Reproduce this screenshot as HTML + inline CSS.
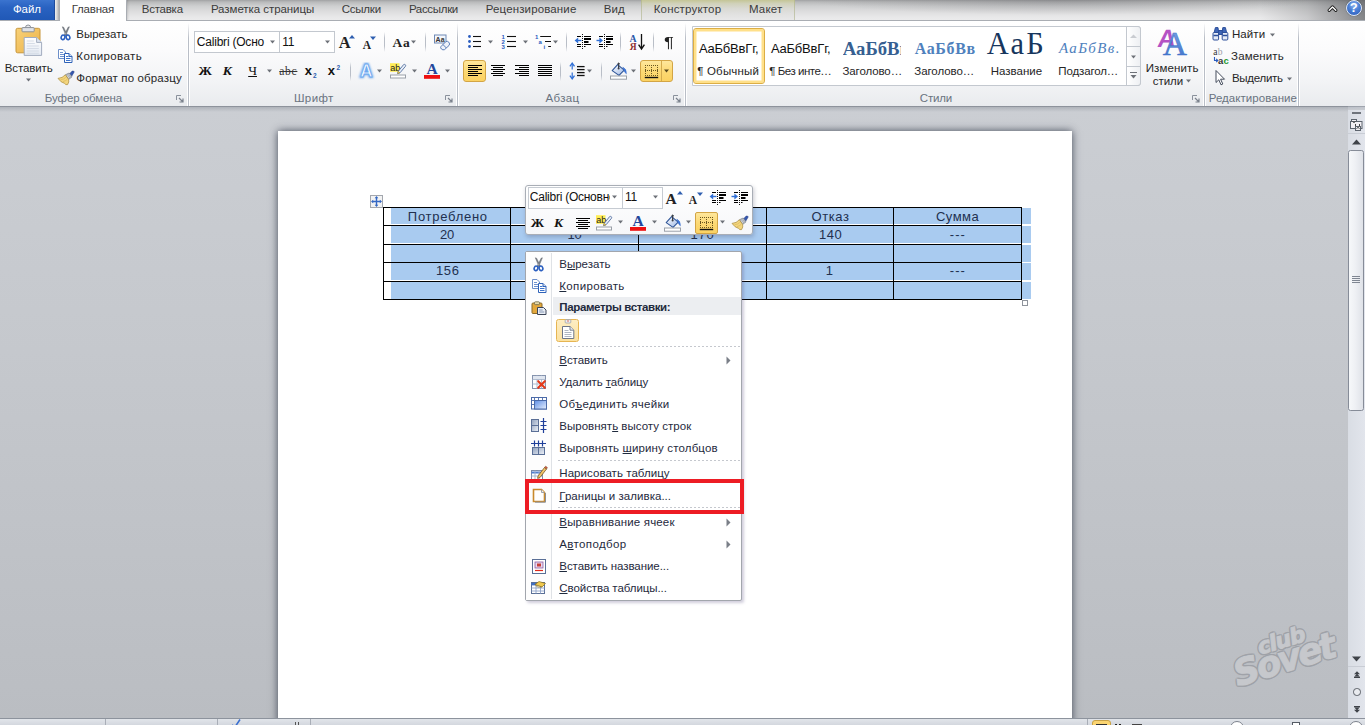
<!DOCTYPE html><html lang="ru"><head><meta charset="utf-8"><title>Word</title><style>
html,body{margin:0;padding:0}
body{width:1365px;height:725px;overflow:hidden;position:relative;background:#c6c9ce;font-family:"Liberation Sans",sans-serif;font-size:12px}
.t{position:absolute;white-space:pre;}
#app{position:absolute;left:0;top:0;width:1365px;height:725px;overflow:hidden}
#tabs{position:absolute;left:0;top:0;width:1365px;height:20px;background:linear-gradient(#a0a1a3 0,#b9babb 10%,#cecfd0 30%,#dcdcdd 55%,#e8e8e9 85%,#ebebec 100%)}
#ribbon{position:absolute;left:0;top:20px;width:1365px;height:86px;background:linear-gradient(#ffffff 0,#fbfbfc 35%,#f3f4f6 70%,#e9ebee 100%)}
#doc{position:absolute;left:0;top:106px;width:1348px;height:613px;background:linear-gradient(#cbced3 0,#c5c8cd 40%,#babdc2 100%);overflow:hidden}
.vsep{position:absolute;width:1px;background:linear-gradient(rgba(170,176,186,0) 0,#b9bec7 30%,#b9bec7 70%,rgba(170,176,186,0) 100%)}
.gsep{position:absolute;width:3px;background:linear-gradient(90deg,#fff 0,#fff 33.3%,#b9bec7 33.3%,#b9bec7 66.6%,#fff 66.6%,#fff 100%)}
</style></head><body><div id="app">
<div id="tabs"><div style="position:absolute;left:1260.0px;top:0.0px;width:105.0px;height:20.0px;background:linear-gradient(90deg,rgba(90,92,96,0) 0,rgba(90,92,96,.22) 45%,rgba(70,72,76,.62) 100%)"></div><div style="position:absolute;left:800.0px;top:0.0px;width:520.0px;height:16.0px;background:radial-gradient(ellipse 250px 15px at 50% 0,rgba(70,70,76,.26),rgba(70,70,76,0))"></div><div style="position:absolute;left:641.0px;top:0.0px;width:154.0px;height:20.0px;background:linear-gradient(#c4c596 0,#d0d1ba 18%,#d9d9d2 42%,#e1e1e0 70%,#e8e8e9 100%);border-left:1px solid rgba(170,174,130,.55);border-right:1px solid rgba(170,174,130,.55);box-sizing:border-box"></div><div style="position:absolute;left:0.0px;top:0.0px;width:55.0px;height:20.0px;background:linear-gradient(#3b74cf 0,#2a63c2 35%,#2058b6 100%);border-right:1px solid #1d4a9c;box-sizing:border-box"><span class="t" style="left:12.9px;top:1.3px;font-size:11.5px;line-height:16px;color:#fff;letter-spacing:-0.03px;">Файл</span></div><div style="position:absolute;left:55.0px;top:0.0px;width:4.0px;height:20.0px;background:linear-gradient(90deg,#eeeff0,#bfc0c2)"></div><div style="position:absolute;left:59.0px;top:-4.0px;width:68.0px;height:25.0px;background:#fff;border:1px solid #a9adb3;border-bottom:none;border-radius:3px 3px 0 0;box-sizing:border-box;box-shadow:0 0 3px rgba(0,0,0,.25)"></div><div style="position:absolute;left:60.0px;top:19.0px;width:66.0px;height:2.0px;background:#fff"></div><span class="t" style="left:71.7px;top:1.3px;font-size:11.5px;line-height:16px;color:#3b3b3b;letter-spacing:-0.20px;">Главная</span><span class="t" style="left:141.7px;top:1.3px;font-size:11.5px;line-height:16px;color:#3b3b3b;letter-spacing:-0.23px;">Вставка</span><span class="t" style="left:210.9px;top:1.3px;font-size:11.5px;line-height:16px;color:#3b3b3b;letter-spacing:-0.06px;">Разметка страницы</span><span class="t" style="left:341.7px;top:1.3px;font-size:11.5px;line-height:16px;color:#3b3b3b;letter-spacing:-0.22px;">Ссылки</span><span class="t" style="left:408.9px;top:1.3px;font-size:11.5px;line-height:16px;color:#3b3b3b;letter-spacing:-0.32px;">Рассылки</span><span class="t" style="left:485.7px;top:1.3px;font-size:11.5px;line-height:16px;color:#3b3b3b;letter-spacing:0.14px;">Рецензирование</span><span class="t" style="left:603.7px;top:1.3px;font-size:11.5px;line-height:16px;color:#3b3b3b;letter-spacing:0.08px;">Вид</span><span class="t" style="left:653.7px;top:1.3px;font-size:11.5px;line-height:16px;color:#3b3b3b;letter-spacing:0.18px;">Конструктор</span><span class="t" style="left:748.9px;top:1.3px;font-size:11.5px;line-height:16px;color:#3b3b3b;letter-spacing:0.21px;">Макет</span><svg style="position:absolute;left:1327.0px;top:4.0px;" width="11" height="9" viewBox="0 0 11 9"><path d="M2.2 6.3L5.5 3L8.8 6.3" fill="none" stroke="#222" stroke-width="3.2" stroke-linejoin="round" stroke-linecap="round"/><path d="M2.2 6.3L5.5 3L8.8 6.3" fill="none" stroke="#fff" stroke-width="1.3" stroke-linejoin="round" stroke-linecap="round"/></svg><div style="position:absolute;left:1346.0px;top:0.0px;width:16.0px;height:16.0px;border-radius:50%;background:radial-gradient(circle at 50% 30%,#8fb4ee 0,#4a7fd6 45%,#2a5ab8 100%);border:1px solid #dfe8f7;box-sizing:border-box;box-shadow:0 0 1px #234"></div><span class="t" style="left:1349.7px;top:0.3px;font-size:13px;line-height:16px;color:#fff;font-weight:bold;">?</span></div>
<div id="ribbon"><div style="position:absolute;left:0.0px;top:0.0px;width:1365.0px;height:1.0px;background:#a9adb3"></div><div style="position:absolute;left:60.0px;top:0.0px;width:66.0px;height:1.0px;background:#fff"></div><svg style="position:absolute;left:14.0px;top:4.0px;" width="30" height="34" viewBox="0 0 30 34"><defs><linearGradient id="pb1" x1="0" y1="0" x2="1" y2="1"><stop offset="0" stop-color="#f8d27a"/><stop offset="1" stop-color="#ecb146"/></linearGradient>
<linearGradient id="pb2" x1="0" y1="0" x2="0" y2="1"><stop offset="0" stop-color="#ffffff"/><stop offset="1" stop-color="#e3e9f3"/></linearGradient></defs>
<rect x="2" y="4.3" width="24" height="24.5" rx="1.6" fill="url(#pb1)" stroke="#c8963a" stroke-width="1"/>
<path d="M11.5 3.6a2.6 2.6 0 0 1 5.2 0" fill="#e9ebee" stroke="#8b9099"/><rect x="8" y="3.6" width="12.2" height="4.2" rx="0.8" fill="#dfe2e7" stroke="#8b9099"/>
<path d="M10.2 13.5H22.6L27.6 18.4V31.4H10.2z" fill="url(#pb2)" stroke="#a3adbf"/><path d="M22.6 13.5V18.4H27.6" fill="#dde4ef" stroke="#a3adbf"/>
<path d="M12.8 17h7M12.8 19.5h8M12.8 22h12M12.8 24.5h12M12.8 27h12M12.8 29.3h12" stroke="#d3d9e4" stroke-width="0.9"/></svg><span class="t" style="left:4.7px;top:39.7px;font-size:11.5px;line-height:16px;color:#262626;letter-spacing:-0.11px;">Вставить</span><svg style="position:absolute;left:25.0px;top:58.0px;" width="7" height="5" viewBox="0 0 7 5"><path d="M1.0 0.5h5l-2.5 3z" fill="#6d7178"/></svg><svg style="position:absolute;left:58.0px;top:6.0px;" width="14" height="15" viewBox="0 0 14 15"><path d="M4.3 0.8L5.6 1.2L9.4 9L8 9.6zM11.4 0.8L10.1 1.2L6.3 9L7.7 9.6z" fill="#7b8089" stroke="#5f646d" stroke-width="0.5"/>
<ellipse cx="5" cy="11.3" rx="1.8" ry="2.3" fill="#fff" stroke="#2b5fc0" stroke-width="1.6" transform="rotate(20 5 11.3)"/><ellipse cx="10" cy="11.3" rx="1.8" ry="2.3" fill="#fff" stroke="#2b5fc0" stroke-width="1.6" transform="rotate(-20 10 11.3)"/></svg><span class="t" style="left:76.3px;top:6.0px;font-size:11.5px;line-height:16px;color:#262626;letter-spacing:-0.01px;">Вырезать</span><svg style="position:absolute;left:57.0px;top:28.0px;" width="16" height="15" viewBox="0 0 16 15"><path d="M1.5 1.5H6L8.5 4V10.5H1.5z" fill="#fff" stroke="#6d8fc9"/><path d="M3 4.5h3M3 6.5h4M3 8.5h4" stroke="#5f86c9" stroke-width="0.9"/>
<path d="M7.5 5.5H12L15 8.5V14.5H7.5z" fill="#fff" stroke="#2f62b8"/><path d="M12 5.5V8.5H15" fill="#cfdcf2" stroke="#2f62b8"/><path d="M9 8.5h2.5M9 10.5h4.5M9 12.5h4.5" stroke="#3e74cc" stroke-width="1"/></svg><span class="t" style="left:76.3px;top:27.5px;font-size:11.5px;line-height:16px;color:#262626;letter-spacing:0.38px;">Копировать</span><svg style="position:absolute;left:57.0px;top:50.0px;" width="18" height="16" viewBox="0 0 18 16"><path d="M12.2 4.2L15.2 1.1Q16.7 0.5 17.2 1.9L14.6 6.3z" fill="#3558b0" stroke="#263f86" stroke-width="0.6"/>
<path d="M8.4 4.8L12.2 3L15 6.8L11.6 9.4z" fill="#cfd3da" stroke="#6f7580" stroke-width="0.7"/><path d="M10 4.2L13 8.2M11.2 3.6L14.1 7.5" stroke="#8a909b" stroke-width="0.6"/>
<path d="M8.4 4.8L11.6 9.4Q12.4 12 10.6 14.6Q8.6 15.2 7.6 13.4Q4 12.6 1 8.4Q5.4 8.2 8.4 4.8z" fill="#f3d57e" stroke="#a8893a" stroke-width="0.7"/>
<path d="M3.6 9.6Q6.4 9.8 8.8 7.4M6 11.6Q8.6 11 10.4 9.2" fill="none" stroke="#d8b85c" stroke-width="0.7"/></svg><span class="t" style="left:76.3px;top:50.0px;font-size:11.5px;line-height:16px;color:#262626;letter-spacing:0.14px;">Формат по образцу</span><span class="t" style="left:44.8px;top:69.7px;font-size:11.5px;line-height:16px;color:#6a7380;letter-spacing:-0.07px;">Буфер обмена</span><svg style="position:absolute;left:176.0px;top:75.0px;" width="8" height="8" viewBox="0 0 8 8"><path d="M0.5 5V0.5H5" fill="none" stroke="#8a919c"/><path d="M3 3L6.5 6.5M7 3.5V7H3.5" fill="none" stroke="#7a818c" stroke-width="1.2"/></svg><div class="gsep" style="position:absolute;left:187.0px;top:3.0px;width:3.0px;height:83.0px;-webkit-mask-image:linear-gradient(transparent 0,#000 18%);mask-image:linear-gradient(transparent 0,#000 18%)"></div><div style="position:absolute;left:194.0px;top:11.0px;width:86.0px;height:22.0px;background:#fff;border:1px solid #c3c8cf;box-sizing:border-box"></div><div style="position:absolute;left:279.0px;top:11.0px;width:56.0px;height:22.0px;background:#fff;border:1px solid #c3c8cf;box-sizing:border-box"></div><span class="t" style="left:196.8px;top:13.9px;font-size:12px;line-height:16px;color:#111;letter-spacing:-0.21px;">Calibri (Осно</span><svg style="position:absolute;left:269.0px;top:20.0px;" width="7" height="5" viewBox="0 0 7 5"><path d="M1.0 0.5h5l-2.5 3z" fill="#6d7178"/></svg><span class="t" style="left:282.3px;top:13.9px;font-size:12px;line-height:16px;color:#111;letter-spacing:-0.33px;">11</span><svg style="position:absolute;left:323.5px;top:20.0px;" width="7" height="5" viewBox="0 0 7 5"><path d="M1.0 0.5h5l-2.5 3z" fill="#6d7178"/></svg><span class="t" style="left:338.8px;top:12.2px;font-size:16.5px;line-height:21px;color:#222;font-weight:bold;font-family:'Liberation Serif', serif;">A</span><svg style="position:absolute;left:349.0px;top:14.5px;" width="6" height="4" viewBox="0 0 6 4"><path d="M0 3.5L3 0L6 3.5z" fill="#2f5fb0"/></svg><span class="t" style="left:362.7px;top:16.6px;font-size:11.5px;line-height:16px;color:#222;font-weight:bold;font-family:'Liberation Serif', serif;">A</span><svg style="position:absolute;left:370.0px;top:15.5px;" width="6" height="4" viewBox="0 0 6 4"><path d="M0 0.5L3 4L6 0.5z" fill="#2f5fb0"/></svg><div class="vsep" style="position:absolute;left:384.0px;top:12.0px;width:1.0px;height:20.0px;"></div><span class="t" style="left:392.6px;top:14.1px;font-size:13.5px;line-height:17px;color:#222;letter-spacing:0.72px;font-weight:bold;font-family:'Liberation Serif', serif;">Aa</span><svg style="position:absolute;left:410.0px;top:20.0px;" width="7" height="5" viewBox="0 0 7 5"><path d="M1.0 0.5h5l-2.5 3z" fill="#6d7178"/></svg><div class="vsep" style="position:absolute;left:425.0px;top:12.0px;width:1.0px;height:20.0px;"></div><svg style="position:absolute;left:433.0px;top:13.7px;" width="18" height="17" viewBox="0 0 18 17"><rect x="1.5" y="1" width="11.5" height="8" fill="#f4f7fc" stroke="#6f89b5"/><text x="2.6" y="7.6" font-family="Liberation Sans" font-size="7" font-weight="bold" fill="#333">Aa</text>
<path d="M8 12.5L13 7.5Q14.5 6.8 15.8 8.2Q17.4 10 16 11.5L11.6 15.6Q9.8 16.4 8.4 15Q7 13.6 8 12.5z" fill="#eef2f9" stroke="#5c7fb8" stroke-width="1"/><path d="M10 10.6L13.4 14" stroke="#5c7fb8"/></svg><span class="t" style="left:198.4px;top:42.4px;font-size:13.5px;line-height:17px;color:#111;font-weight:bold;font-family:'Liberation Serif', serif;">Ж</span><span class="t" style="left:222.7px;top:42.4px;font-size:13.5px;line-height:17px;color:#111;font-weight:bold;font-style:italic;font-family:'Liberation Serif', serif;">К</span><span class="t" style="left:248.2px;top:42.4px;font-size:13.5px;line-height:17px;color:#111;font-family:'Liberation Serif', serif;text-decoration:underline;">Ч</span><svg style="position:absolute;left:265.7px;top:49.0px;" width="7" height="5" viewBox="0 0 7 5"><path d="M1.0 0.5h5l-2.5 3z" fill="#6d7178"/></svg><span class="t" style="left:279.3px;top:43.4px;font-size:11.5px;line-height:16px;color:#333;letter-spacing:0.71px;font-family:'Liberation Serif', serif;text-decoration:line-through;">abc</span><span class="t" style="left:304.7px;top:43.3px;font-size:13px;line-height:16px;color:#111;font-weight:bold;">x</span><span class="t" style="left:313.1px;top:47.5px;font-size:6.5px;line-height:16px;color:#2f5fb0;font-weight:bold;">2</span><span class="t" style="left:327.7px;top:43.3px;font-size:13px;line-height:16px;color:#111;font-weight:bold;">x</span><span class="t" style="left:336.4px;top:39.5px;font-size:6.5px;line-height:16px;color:#2f5fb0;font-weight:bold;">2</span><div class="vsep" style="position:absolute;left:350.0px;top:42.0px;width:1.0px;height:19.0px;"></div><svg style="position:absolute;left:357.0px;top:42.0px;" width="19" height="18" viewBox="0 0 19 18"><defs><filter id="gl1" x="-30%" y="-30%" width="160%" height="160%"><feGaussianBlur stdDeviation="1.1"/></filter></defs>
<text x="3" y="15.3" font-family="Liberation Sans" font-size="17.5" font-weight="bold" fill="#6fa8ee" stroke="#6fa8ee" stroke-width="2.2" filter="url(#gl1)">A</text>
<text x="3" y="15.3" font-family="Liberation Sans" font-size="17.5" font-weight="bold" fill="#f4f9ff" stroke="#6aa8f0" stroke-width="0.8">A</text></svg><svg style="position:absolute;left:376.0px;top:49.0px;" width="7" height="5" viewBox="0 0 7 5"><path d="M1.0 0.5h5l-2.5 3z" fill="#6d7178"/></svg><svg style="position:absolute;left:389.0px;top:42.0px;" width="18" height="17" viewBox="0 0 18 17"><rect x="1" y="1.2" width="9.5" height="8.6" fill="#ffee55"/><text x="1.2" y="8.6" font-family="Liberation Sans" font-size="9" fill="#222">ab</text>
<path d="M9.2 9.4L14.6 2.6Q15.6 2 16.4 2.8Q17 3.6 16.4 4.4L11 10.8L8.6 11.6z" fill="#e8eef8" stroke="#55719f" stroke-width="0.9"/><path d="M8.6 11.6L9.2 9.4L11 10.8z" fill="#f6d35a" stroke="#a58a2e" stroke-width="0.5"/>
<rect x="1.5" y="13" width="15" height="3" fill="#fff" stroke="#9aa0a8"/></svg><svg style="position:absolute;left:410.9px;top:49.0px;" width="7" height="5" viewBox="0 0 7 5"><path d="M1.0 0.5h5l-2.5 3z" fill="#6d7178"/></svg><svg style="position:absolute;left:423.0px;top:42.0px;" width="18" height="17" viewBox="0 0 18 17"><text x="3.6" y="11.9" font-family="Liberation Serif" font-size="15.5" font-weight="bold" fill="#24479c">A</text><rect x="1" y="13" width="16" height="3.8" fill="#ee1111"/></svg><svg style="position:absolute;left:443.9px;top:49.0px;" width="7" height="5" viewBox="0 0 7 5"><path d="M1.0 0.5h5l-2.5 3z" fill="#6d7178"/></svg><span class="t" style="left:293.9px;top:69.7px;font-size:11.5px;line-height:16px;color:#6a7380;letter-spacing:0.41px;">Шрифт</span><svg style="position:absolute;left:445.0px;top:75.0px;" width="8" height="8" viewBox="0 0 8 8"><path d="M0.5 5V0.5H5" fill="none" stroke="#8a919c"/><path d="M3 3L6.5 6.5M7 3.5V7H3.5" fill="none" stroke="#7a818c" stroke-width="1.2"/></svg><div class="gsep" style="position:absolute;left:456.0px;top:3.0px;width:3.0px;height:83.0px;-webkit-mask-image:linear-gradient(transparent 0,#000 18%);mask-image:linear-gradient(transparent 0,#000 18%)"></div><svg style="position:absolute;left:467.0px;top:14.0px;" width="15" height="15" viewBox="0 0 15 15"><circle cx="2.5" cy="2.5" r="1.4" fill="#2a5cbf"/><circle cx="2.5" cy="7.5" r="1.4" fill="#2a5cbf"/><circle cx="2.5" cy="12.5" r="1.4" fill="#2a5cbf"/><path d="M6 2.5H14" stroke="#111" stroke-width="1.1"/><path d="M6 7.5H14" stroke="#111" stroke-width="1.1"/><path d="M6 12.5H14" stroke="#111" stroke-width="1.1"/></svg><svg style="position:absolute;left:486.9px;top:20.0px;" width="7" height="5" viewBox="0 0 7 5"><path d="M1.0 0.5h5l-2.5 3z" fill="#6d7178"/></svg><svg style="position:absolute;left:500.0px;top:13.0px;" width="17" height="16" viewBox="0 0 17 16"><text font-family="Liberation Sans" font-size="6" font-weight="bold" fill="#2a5cbf"><tspan x="1.6" y="5.7">1</tspan><tspan x="1.6" y="10.7">2</tspan><tspan x="1.6" y="15.7">3</tspan></text><path d="M7 3.5H16" stroke="#111" stroke-width="1.1"/><path d="M7 8.5H16" stroke="#111" stroke-width="1.1"/><path d="M7 13.5H16" stroke="#111" stroke-width="1.1"/></svg><svg style="position:absolute;left:521.8px;top:20.0px;" width="7" height="5" viewBox="0 0 7 5"><path d="M1.0 0.5h5l-2.5 3z" fill="#6d7178"/></svg><svg style="position:absolute;left:533.0px;top:13.0px;" width="20" height="17" viewBox="0 0 20 17"><text font-family="Liberation Sans" font-size="6" font-weight="bold" fill="#2a5cbf"><tspan x="2" y="5.7">1</tspan><tspan x="5.6" y="10.7">a</tspan><tspan x="10.6" y="16">i</tspan></text><path d="M7.2 3.5H18M12 8.5H18M15.2 13.5H18" stroke="#111" stroke-width="1.1"/></svg><svg style="position:absolute;left:552.3px;top:20.0px;" width="7" height="5" viewBox="0 0 7 5"><path d="M1.0 0.5h5l-2.5 3z" fill="#6d7178"/></svg><div class="vsep" style="position:absolute;left:566.0px;top:12.0px;width:1.0px;height:20.0px;"></div><svg style="position:absolute;left:574.0px;top:13.0px;" width="18" height="17" viewBox="0 0 18 17"><path d="M8.5 1V16" stroke="#111" stroke-width="1" stroke-dasharray="1 1"/><path d="M3 3.5H7M10 3.5H17M3 11.5H7M10 11.5H17M3 13.5H7M10 13.5H11.5" stroke="#000" stroke-width="1"/><path d="M10 6H17M10 9H14.5" stroke="#000" stroke-width="2"/><path d="M3 7.5H7.5" stroke="#2f6fd6" stroke-width="1.4"/><path d="M0.6 7.5L4.2 4.6V10.4z" fill="#2f6fd6"/></svg><svg style="position:absolute;left:596.0px;top:13.0px;" width="18" height="17" viewBox="0 0 18 17"><path d="M8.5 1V16" stroke="#111" stroke-width="1" stroke-dasharray="1 1"/><path d="M3 3.5H7M10 3.5H17M3 11.5H7M10 11.5H17M3 13.5H7M10 13.5H11.5" stroke="#000" stroke-width="1"/><path d="M10 6H17M10 9H14.5" stroke="#000" stroke-width="2"/><path d="M0.5 7.5H4" stroke="#2f6fd6" stroke-width="1.4"/><path d="M7 7.5L3.4 4.6V10.4z" fill="#2f6fd6"/></svg><div class="vsep" style="position:absolute;left:620.0px;top:12.0px;width:1.0px;height:20.0px;"></div><svg style="position:absolute;left:628.0px;top:13.0px;" width="18" height="18" viewBox="0 0 18 18"><text x="1.6" y="8.6" font-family="Liberation Serif" font-size="9.8" font-weight="bold" fill="#2a56a8">А</text><text x="1.8" y="16.7" font-family="Liberation Serif" font-size="9.5" font-weight="bold" fill="#8e2f2f">Я</text>
<path d="M13.5 1V15" stroke="#111" stroke-width="1.3"/><path d="M10.6 11.6L13.5 16L16.4 11.6" fill="none" stroke="#111" stroke-width="1.4"/></svg><div class="vsep" style="position:absolute;left:653.0px;top:12.0px;width:1.0px;height:20.0px;"></div><span class="t" style="left:663.7px;top:12.2px;font-size:15px;line-height:19px;color:#222;transform:scaleX(1.22);transform-origin:0 50%;">¶</span><div style="position:absolute;left:463.0px;top:40.0px;width:23.0px;height:22.0px;background:linear-gradient(#fee79c 0,#fcd872 55%,#fbd263 100%);border:1px solid #d3a545;border-radius:3px;box-sizing:border-box"></div><svg style="position:absolute;left:467.0px;top:44.0px;" width="16" height="13" viewBox="0 0 16 13"><path d="M1 1.5H15" stroke="#000" stroke-width="1"/><path d="M1 5.5H15" stroke="#000" stroke-width="1"/><path d="M1 9.5H15" stroke="#000" stroke-width="1"/><path d="M1 3.5H11" stroke="#000" stroke-width="1"/><path d="M1 7.5H11" stroke="#000" stroke-width="1"/><path d="M1 11.5H11" stroke="#000" stroke-width="1"/></svg><svg style="position:absolute;left:490.0px;top:44.0px;" width="16" height="13" viewBox="0 0 16 13"><path d="M1 1.5H15" stroke="#000" stroke-width="1"/><path d="M1 5.5H15" stroke="#000" stroke-width="1"/><path d="M1 9.5H15" stroke="#000" stroke-width="1"/><path d="M3 3.5H13" stroke="#000" stroke-width="1"/><path d="M3 7.5H13" stroke="#000" stroke-width="1"/><path d="M3 11.5H13" stroke="#000" stroke-width="1"/></svg><svg style="position:absolute;left:514.0px;top:44.0px;" width="16" height="13" viewBox="0 0 16 13"><path d="M1 1.5H15" stroke="#000" stroke-width="1"/><path d="M1 5.5H15" stroke="#000" stroke-width="1"/><path d="M1 9.5H15" stroke="#000" stroke-width="1"/><path d="M5 3.5H15" stroke="#000" stroke-width="1"/><path d="M5 7.5H15" stroke="#000" stroke-width="1"/><path d="M5 11.5H15" stroke="#000" stroke-width="1"/></svg><svg style="position:absolute;left:537.0px;top:44.0px;" width="16" height="13" viewBox="0 0 16 13"><path d="M1 1.5H15" stroke="#000" stroke-width="1"/><path d="M1 3.5H15" stroke="#000" stroke-width="1"/><path d="M1 5.5H15" stroke="#000" stroke-width="1"/><path d="M1 7.5H15" stroke="#000" stroke-width="1"/><path d="M1 9.5H15" stroke="#000" stroke-width="1"/><path d="M1 11.5H15" stroke="#000" stroke-width="1"/></svg><div class="vsep" style="position:absolute;left:560.0px;top:42.0px;width:1.0px;height:19.0px;"></div><svg style="position:absolute;left:568.0px;top:42.0px;" width="18" height="18" viewBox="0 0 18 18"><path d="M4.2 2V7.6M4.2 10.4V16" stroke="#2f6fd6" stroke-width="1.2"/><path d="M1.9 4.4L4.2 1.2L6.5 4.4M1.9 13.6L4.2 16.8L6.5 13.6" fill="none" stroke="#2f6fd6" stroke-width="1.3"/><path d="M9 4.6H16.6" stroke="#111" stroke-width="1.3"/><path d="M9 7.6H16.6" stroke="#111" stroke-width="1.3"/><path d="M9 10.6H16.6" stroke="#111" stroke-width="1.3"/><path d="M9 13.5H16.6" stroke="#111" stroke-width="1.3"/></svg><svg style="position:absolute;left:586.0px;top:49.0px;" width="7" height="5" viewBox="0 0 7 5"><path d="M1.0 0.5h5l-2.5 3z" fill="#6d7178"/></svg><div class="vsep" style="position:absolute;left:601.0px;top:42.0px;width:1.0px;height:19.0px;"></div><svg style="position:absolute;left:609.0px;top:42.0px;" width="18" height="18" viewBox="0 0 18 18"><defs><linearGradient id="bk1" x1="0" y1="0" x2="1" y2="1"><stop offset="0" stop-color="#ffffff"/><stop offset="1" stop-color="#9fb9e6"/></linearGradient></defs>
<path d="M3.2 8.6L8.6 2.6L15.2 8.2L10 13.4z" fill="url(#bk1)" stroke="#2f5597" stroke-width="1.1" stroke-linejoin="round"/>
<path d="M9.6 0.9V6.4" stroke="#3a3f48" stroke-width="1.2"/><circle cx="9.6" cy="6.6" r="1" fill="#3a3f48"/><path d="M8.2 2.2Q9.6 -0.2 11 2.2" fill="none" stroke="#3a3f48" stroke-width="0.9"/>
<path d="M13.8 5.2Q17.6 6.6 17.4 11.8Q15.4 10.6 14.9 8z" fill="#3f7be0" stroke="#2f62c0" stroke-width="0.5"/>
<rect x="1.5" y="14" width="16" height="3.2" fill="#fff" stroke="#9aa0a8"/></svg><svg style="position:absolute;left:630.0px;top:49.0px;" width="7" height="5" viewBox="0 0 7 5"><path d="M1.0 0.5h5l-2.5 3z" fill="#6d7178"/></svg><div style="position:absolute;left:640.0px;top:40.0px;width:33.0px;height:22.0px;background:linear-gradient(#fee79c 0,#fcd872 55%,#fbd263 100%);border:1px solid #d3a545;border-radius:3px;box-sizing:border-box"></div><div style="position:absolute;left:660.5px;top:41.0px;width:1.0px;height:20.0px;background:#d4ab4e"></div><svg style="position:absolute;left:644.0px;top:43.0px;" width="15" height="16" viewBox="0 0 15 16"><path d="M1 2.5H14M1 7.5H14M1 12.5H14" stroke="#6b5720" stroke-width="1" stroke-dasharray="1 1" fill="none"/><path d="M1.5 2V13M7.5 2V13M13.5 2V13" stroke="#6b5720" stroke-width="1" stroke-dasharray="1 1" fill="none"/><path d="M0.8 14.5H14.2" stroke="#111" stroke-width="1.4"/></svg><svg style="position:absolute;left:663.0px;top:49.0px;" width="7" height="5" viewBox="0 0 7 5"><path d="M1.0 0.5h5l-2.5 3z" fill="#5a4a20"/></svg><span class="t" style="left:545.5px;top:69.7px;font-size:11.5px;line-height:16px;color:#6a7380;letter-spacing:0.33px;">Абзац</span><svg style="position:absolute;left:673.0px;top:75.0px;" width="8" height="8" viewBox="0 0 8 8"><path d="M0.5 5V0.5H5" fill="none" stroke="#8a919c"/><path d="M3 3L6.5 6.5M7 3.5V7H3.5" fill="none" stroke="#7a818c" stroke-width="1.2"/></svg><div class="gsep" style="position:absolute;left:684.0px;top:3.0px;width:3.0px;height:83.0px;-webkit-mask-image:linear-gradient(transparent 0,#000 18%);mask-image:linear-gradient(transparent 0,#000 18%)"></div><div style="position:absolute;left:692.0px;top:6.0px;width:449.0px;height:60.0px;background:#fff;border:1px solid #c3c8cf;box-sizing:border-box;border-radius:0 3px 3px 0"></div><div style="position:absolute;left:693.0px;top:8.0px;width:72.0px;height:56.0px;background:#fff;border:1px solid #dcae45;border-radius:3px;box-sizing:border-box;box-shadow:inset 0 0 0 2.5px #ffe08a"></div><span class="t" style="left:698.9px;top:20.6px;font-size:13px;line-height:16px;color:#111;letter-spacing:-0.20px;">АаБбВвГг,</span><span class="t" style="left:697.2px;top:42.9px;font-size:11.5px;line-height:16px;color:#262626;letter-spacing:0.20px;">¶ Обычный</span><span class="t" style="left:770.9px;top:20.6px;font-size:13px;line-height:16px;color:#111;letter-spacing:-0.20px;">АаБбВвГг,</span><span class="t" style="left:769.3px;top:42.9px;font-size:11.5px;line-height:16px;color:#262626;letter-spacing:-0.48px;">¶ Без инте…</span><div style="position:absolute;left:843.0px;top:10.0px;width:57.5px;height:30.0px;overflow:hidden"><span class="t" style="left:-0.2px;top:6.6px;font-size:18.7px;line-height:24px;color:#365f91;font-weight:bold;font-family:'Liberation Serif', serif;">АаБбВв</span></div><span class="t" style="left:842.5px;top:42.9px;font-size:11.5px;line-height:16px;color:#262626;letter-spacing:-0.11px;">Заголово…</span><span class="t" style="left:914.7px;top:18.7px;font-size:16px;line-height:20px;color:#4f81bd;letter-spacing:0.66px;font-weight:bold;font-family:'Liberation Serif', serif;">АаБбВв</span><span class="t" style="left:914.3px;top:42.9px;font-size:11.5px;line-height:16px;color:#262626;letter-spacing:-0.07px;">Заголово…</span><div style="position:absolute;left:986.0px;top:8.0px;width:59.3px;height:32.0px;overflow:hidden"><span class="t" style="left:0.8px;top:-2.8px;font-size:30.5px;line-height:39px;color:#17365d;letter-spacing:2.20px;font-family:'Liberation Serif', serif;">АаБб</span></div><span class="t" style="left:990.7px;top:42.9px;font-size:11.5px;line-height:16px;color:#262626;letter-spacing:0.01px;">Название</span><span class="t" style="left:1059.0px;top:18.8px;font-size:15px;line-height:19px;color:#4f81bd;letter-spacing:1.36px;font-style:italic;font-family:'Liberation Serif', serif;">АаБбВв.</span><span class="t" style="left:1058.3px;top:42.9px;font-size:11.5px;line-height:16px;color:#262626;letter-spacing:-0.13px;">Подзагол…</span><div style="position:absolute;left:1126.0px;top:6.0px;width:15.0px;height:60.0px;border:1px solid #c3c8cf;box-sizing:border-box;background:linear-gradient(90deg,#fff,#eef0f3);border-radius:0 3px 3px 0"></div><div style="position:absolute;left:1126.0px;top:26.0px;width:15.0px;height:1.0px;background:#c3c8cf"></div><div style="position:absolute;left:1126.0px;top:46.0px;width:15.0px;height:1.0px;background:#c3c8cf"></div><svg style="position:absolute;left:1130.0px;top:14.0px;" width="7" height="5" viewBox="0 0 7 5"><path d="M0 4L3.5 0.5L7 4z" fill="#c9ccd1"/></svg><svg style="position:absolute;left:1130.0px;top:34.5px;" width="7" height="5" viewBox="0 0 7 5"><path d="M1.0 0.5h5l-2.5 3z" fill="#6d7178"/></svg><svg style="position:absolute;left:1130.0px;top:52.0px;" width="8" height="8" viewBox="0 0 8 8"><path d="M0 0.5H7" stroke="#6d7178"/><path d="M0.5 3h6l-3 3.5z" fill="#6d7178"/></svg><svg style="position:absolute;left:1155.0px;top:6.0px;" width="34" height="31" viewBox="0 0 34 31"><defs><linearGradient id="cs1" x1="0" y1="0" x2="0" y2="1"><stop offset="0" stop-color="#7fa9e8"/><stop offset="1" stop-color="#3a6fc8"/></linearGradient></defs>
<text x="4.6" y="20.5" font-family="Liberation Sans" font-size="25" font-weight="bold" fill="#b552c4" transform="skewX(-8)">A</text>
<text x="7.8" y="28.8" font-family="Liberation Serif" font-size="33.5" fill="url(#cs1)" stroke="#3a6fc8" stroke-width="0.5">A</text></svg><span class="t" style="left:1145.7px;top:39.7px;font-size:11.5px;line-height:16px;color:#262626;letter-spacing:0.12px;">Изменить</span><span class="t" style="left:1152.7px;top:52.5px;font-size:11.5px;line-height:16px;color:#262626;letter-spacing:-0.02px;">стили</span><svg style="position:absolute;left:1185.1px;top:59.0px;" width="7" height="5" viewBox="0 0 7 5"><path d="M1.0 0.5h5l-2.5 3z" fill="#6d7178"/></svg><span class="t" style="left:919.8px;top:69.7px;font-size:11.5px;line-height:16px;color:#6a7380;letter-spacing:-0.17px;">Стили</span><svg style="position:absolute;left:1192.0px;top:75.0px;" width="8" height="8" viewBox="0 0 8 8"><path d="M0.5 5V0.5H5" fill="none" stroke="#8a919c"/><path d="M3 3L6.5 6.5M7 3.5V7H3.5" fill="none" stroke="#7a818c" stroke-width="1.2"/></svg><div class="gsep" style="position:absolute;left:1203.0px;top:3.0px;width:3.0px;height:83.0px;-webkit-mask-image:linear-gradient(transparent 0,#000 18%);mask-image:linear-gradient(transparent 0,#000 18%)"></div><svg style="position:absolute;left:1212.0px;top:6.0px;" width="17" height="15" viewBox="0 0 17 15"><rect x="1" y="6.5" width="5.6" height="7.5" rx="1" fill="#e6ecf7" stroke="#2d4f9a"/><rect x="10.2" y="6.5" width="5.6" height="7.5" rx="1" fill="#e6ecf7" stroke="#2d4f9a"/>
<path d="M2.2 6.5L3.4 1.6H6L6.6 6.5zM10.2 6.5L10.8 1.6H13.4L14.6 6.5z" fill="#4068b8" stroke="#2d4f9a"/><rect x="6.6" y="4.5" width="3.6" height="4" fill="#4068b8" stroke="#2d4f9a"/><path d="M1.5 9.5h4.6M10.7 9.5h4.6" stroke="#2d4f9a" stroke-width="1.6"/></svg><span class="t" style="left:1231.9px;top:6.0px;font-size:11.5px;line-height:16px;color:#262626;letter-spacing:0.11px;">Найти</span><svg style="position:absolute;left:1268.9px;top:12.5px;" width="7" height="5" viewBox="0 0 7 5"><path d="M1.0 0.5h5l-2.5 3z" fill="#6d7178"/></svg><svg style="position:absolute;left:1213.0px;top:28.0px;" width="17" height="16" viewBox="0 0 17 16"><text x="0.2" y="7" font-family="Liberation Serif" font-size="9.5" fill="#333">a</text><text x="4.8" y="7" font-family="Liberation Serif" font-size="9.5" fill="#9aa0a8">b</text>
<text x="5" y="15.5" font-family="Liberation Sans" font-size="9.5" font-weight="bold" fill="#333">a</text><text x="10.5" y="15.5" font-family="Liberation Sans" font-size="9.5" font-weight="bold" fill="#1f9a2f">c</text>
<path d="M1.5 9V12.5H4.5M3.2 10.8L4.8 12.5L3.2 14.2" fill="none" stroke="#2a5cbf" stroke-width="1.1"/></svg><span class="t" style="left:1231.1px;top:27.5px;font-size:11.5px;line-height:16px;color:#262626;letter-spacing:0.13px;">Заменить</span><svg style="position:absolute;left:1214.0px;top:49.0px;" width="13" height="17" viewBox="0 0 13 17"><path d="M2 1.5V13.5L4.8 10.8L7 15.8L8.8 15L6.6 10.2H10.5z" fill="#fff" stroke="#444c5c" stroke-width="1" stroke-linejoin="round"/></svg><span class="t" style="left:1231.9px;top:50.0px;font-size:11.5px;line-height:16px;color:#262626;letter-spacing:-0.27px;">Выделить</span><svg style="position:absolute;left:1285.9px;top:56.5px;" width="7" height="5" viewBox="0 0 7 5"><path d="M1.0 0.5h5l-2.5 3z" fill="#6d7178"/></svg><span class="t" style="left:1208.7px;top:69.7px;font-size:11.5px;line-height:16px;color:#6a7380;letter-spacing:0.05px;">Редактирование</span><div class="gsep" style="position:absolute;left:1297.0px;top:3.0px;width:3.0px;height:83.0px;-webkit-mask-image:linear-gradient(transparent 0,#000 18%);mask-image:linear-gradient(transparent 0,#000 18%)"></div></div>
<div id="doc"><div style="position:absolute;left:0.0px;top:0.0px;width:1348.0px;height:6.0px;background:linear-gradient(rgba(110,116,126,.85) 0,rgba(130,136,146,.35) 25%,rgba(150,156,166,0) 100%)"></div><div class="page" style="position:absolute;left:278.0px;top:25.0px;width:794.0px;height:594.0px;background:#fff;box-shadow:0 0 8px rgba(45,52,68,.85)"><div class="tbl" style="position:absolute;left:105.0px;top:76.0px;width:648.0px;height:93.0px;"><div style="position:absolute;left:8.0px;top:1.0px;width:630.0px;height:16.0px;background:#a9cbf0"></div><div style="position:absolute;left:639.0px;top:1.0px;width:8.5px;height:16.0px;background:#a9cbf0"></div><div style="position:absolute;left:8.0px;top:19.0px;width:630.0px;height:17.0px;background:#a9cbf0"></div><div style="position:absolute;left:639.0px;top:19.0px;width:8.5px;height:17.0px;background:#a9cbf0"></div><div style="position:absolute;left:8.0px;top:38.0px;width:630.0px;height:17.0px;background:#a9cbf0"></div><div style="position:absolute;left:639.0px;top:38.0px;width:8.5px;height:17.0px;background:#a9cbf0"></div><div style="position:absolute;left:8.0px;top:56.0px;width:630.0px;height:17.0px;background:#a9cbf0"></div><div style="position:absolute;left:639.0px;top:56.0px;width:8.5px;height:17.0px;background:#a9cbf0"></div><div style="position:absolute;left:8.0px;top:75.0px;width:630.0px;height:17.0px;background:#a9cbf0"></div><div style="position:absolute;left:639.0px;top:75.0px;width:8.5px;height:17.0px;background:#a9cbf0"></div><div style="position:absolute;left:0.0px;top:0.0px;width:639.0px;height:1.0px;background:#000"></div><div style="position:absolute;left:0.0px;top:18.0px;width:639.0px;height:1.0px;background:#000"></div><div style="position:absolute;left:0.0px;top:37.0px;width:639.0px;height:1.0px;background:#000"></div><div style="position:absolute;left:0.0px;top:55.0px;width:639.0px;height:1.0px;background:#000"></div><div style="position:absolute;left:0.0px;top:74.0px;width:639.0px;height:1.0px;background:#000"></div><div style="position:absolute;left:0.0px;top:92.0px;width:639.0px;height:1.0px;background:#000"></div><div style="position:absolute;left:0.0px;top:0.0px;width:1.0px;height:93.0px;background:#000"></div><div style="position:absolute;left:127.0px;top:0.0px;width:1.0px;height:93.0px;background:#000"></div><div style="position:absolute;left:255.0px;top:0.0px;width:1.0px;height:93.0px;background:#000"></div><div style="position:absolute;left:383.0px;top:0.0px;width:1.0px;height:93.0px;background:#000"></div><div style="position:absolute;left:510.0px;top:0.0px;width:1.0px;height:93.0px;background:#000"></div><div style="position:absolute;left:638.0px;top:0.0px;width:1.0px;height:93.0px;background:#000"></div><span class="t" style="left:24.8px;top:1.6px;font-size:13px;line-height:16px;color:#22304f;letter-spacing:0.74px;">Потреблено</span><span class="t" style="left:428.4px;top:1.6px;font-size:13px;line-height:16px;color:#22304f;letter-spacing:0.64px;">Отказ</span><span class="t" style="left:553.0px;top:1.6px;font-size:13px;line-height:16px;color:#22304f;letter-spacing:0.45px;">Сумма</span><span class="t" style="left:56.9px;top:19.9px;font-size:13px;line-height:16px;color:#22304f;letter-spacing:-0.11px;">20</span><span class="t" style="left:184.4px;top:19.9px;font-size:13px;line-height:16px;color:#22304f;letter-spacing:-0.11px;">10</span><span class="t" style="left:307.5px;top:19.9px;font-size:13px;line-height:16px;color:#22304f;letter-spacing:0.73px;">170</span><span class="t" style="left:435.9px;top:19.9px;font-size:13px;line-height:16px;color:#22304f;letter-spacing:0.53px;">140</span><span class="t" style="left:566.7px;top:19.9px;font-size:13px;line-height:16px;color:#22304f;letter-spacing:1.13px;">---</span><span class="t" style="left:52.9px;top:56.4px;font-size:13px;line-height:16px;color:#22304f;letter-spacing:0.73px;">156</span><span class="t" style="left:442.8px;top:56.4px;font-size:13px;line-height:16px;color:#22304f;letter-spacing:1.33px;">1</span><span class="t" style="left:566.7px;top:56.4px;font-size:13px;line-height:16px;color:#22304f;letter-spacing:1.13px;">---</span></div><svg style="position:absolute;left:92.0px;top:63.5px;" width="13" height="13" viewBox="0 0 13 13"><rect x="0.5" y="0.5" width="12" height="12" fill="#f3f3f3" stroke="#a3a7ae"/><path d="M6.5 2V11M2 6.5H11" stroke="#3568c4" stroke-width="1.4"/><path d="M6.5 1L8.3 3.2H4.7zM6.5 12L8.3 9.8H4.7zM1 6.5L3.2 4.7V8.3zM12 6.5L9.8 4.7V8.3z" fill="#3568c4"/></svg><div style="position:absolute;left:743.5px;top:168.5px;width:6.0px;height:6.0px;border:1px solid #8f949c;background:#fff;box-sizing:border-box"></div></div><div style="position:absolute;left:1228.0px;top:506.0px;width:112.0px;height:84.0px;"><span class="t" style="left:29px;top:17px;font:italic bold 22px/24px 'DejaVu Sans',sans-serif;letter-spacing:-1px;color:#c6c8cc;-webkit-text-stroke:1px #c6c8cc;text-shadow:1.9px 0 0 #9fa2a8,-1.9px 0 0 #9fa2a8,0 1.9px 0 #9fa2a8,0 -1.9px 0 #9fa2a8,1.4px 1.4px 0 #9fa2a8,-1.4px 1.4px 0 #9fa2a8,1.4px -1.4px 0 #9fa2a8,-1.4px -1.4px 0 #9fa2a8;transform:rotate(-17deg);">club</span><span class="t" style="left:4px;top:28px;font:italic bold 36px/40px 'DejaVu Sans',sans-serif;letter-spacing:-2.5px;color:#c6c8cc;-webkit-text-stroke:1px #c6c8cc;text-shadow:1.9px 0 0 #9fa2a8,-1.9px 0 0 #9fa2a8,0 1.9px 0 #9fa2a8,0 -1.9px 0 #9fa2a8,1.4px 1.4px 0 #9fa2a8,-1.4px 1.4px 0 #9fa2a8,1.4px -1.4px 0 #9fa2a8,-1.4px -1.4px 0 #9fa2a8;transform:rotate(-17deg);">Sovet</span></div></div>
<div id="vscroll" style="position:absolute;left:1348px;top:106px;width:17px;height:613px;background:linear-gradient(90deg,#d9dde4,#e2e5ec)"><div style="position:absolute;left:0.0px;top:0.0px;width:17.0px;height:4.0px;background:linear-gradient(rgba(110,116,126,.85) 0,rgba(130,136,146,.35) 25%,#c9ccd1 100%)"></div><div style="position:absolute;left:4.0px;top:6.0px;width:9.0px;height:2.0px;background:#6f747c"></div><svg style="position:absolute;left:2.0px;top:12.0px;" width="13" height="13" viewBox="0 0 13 13"><rect x="1.5" y="1.5" width="5" height="4" fill="#f2f0f4" stroke="#5d646e"/><rect x="0.5" y="3.5" width="11.5" height="7" fill="#f2f0f4" stroke="#5d646e"/><rect x="5.5" y="8.5" width="5" height="4" fill="#f2f0f4" stroke="#5d646e"/><path d="M2.5 3L4 5L5.5 3M6.5 11L8 9L9.5 11" fill="none" stroke="#444" stroke-width="0.8"/><path d="M5.5 6v2M9.5 6v2" stroke="#444"/></svg><div style="position:absolute;left:0.0px;top:27.0px;width:17.0px;height:1.0px;background:#c9cdd5"></div><svg style="position:absolute;left:4.0px;top:32.5px;" width="9" height="6" viewBox="0 0 9 6"><path d="M0 5.5L4.5 0.5L9 5.5z" fill="#3f4349"/></svg><div style="position:absolute;left:0.0px;top:44.0px;width:16.0px;height:261.0px;background:linear-gradient(90deg,#f6f8fa 0,#eef0f4 45%,#dfe2e8 100%);border:1px solid #868c98;border-radius:2.5px;box-sizing:border-box"></div><svg style="position:absolute;left:4.0px;top:170.0px;" width="9" height="9" viewBox="0 0 9 9"><path d="M0 0.5H8" stroke="#7f8692" stroke-width="1"/><path d="M0 2.5H8" stroke="#7f8692" stroke-width="1"/><path d="M0 4.5H8" stroke="#7f8692" stroke-width="1"/><path d="M0 6.5H8" stroke="#7f8692" stroke-width="1"/></svg><svg style="position:absolute;left:4.0px;top:550.0px;" width="9" height="6" viewBox="0 0 9 6"><path d="M0 0.5L4.5 5.5L9 0.5z" fill="#3f4349"/></svg><div style="position:absolute;left:0.0px;top:560.0px;width:17.0px;height:1.0px;background:#c9cdd5"></div><svg style="position:absolute;left:5.0px;top:565.0px;" width="8" height="8" viewBox="0 0 8 8"><path d="M1 3.2L4 0.2L7 3.2zM1 5.8L4 2.8L7 5.8z" fill="#3f4349"/><path d="M1 6.5H7" stroke="#3f4349"/></svg><div style="position:absolute;left:5.0px;top:582.0px;width:7.5px;height:7.5px;border:1.2px solid #5a5f67;border-radius:50%;box-sizing:border-box;background:#e9ebef"></div><svg style="position:absolute;left:5.0px;top:599.0px;" width="8" height="8" viewBox="0 0 8 8"><path d="M1 2.2L4 5.2L7 2.2zM1 4.8L4 7.8L7 4.8z" fill="#3f4349"/><path d="M1 1.5H7" stroke="#3f4349"/></svg></div>
<div id="status" style="position:absolute;left:0;top:718px;width:1365px;height:7px;background:linear-gradient(#e4e7ec,#d3d7de);overflow:hidden"><div style="position:absolute;left:0.0px;top:0.0px;width:1365.0px;height:1.0px;background:#8d939d"></div><div style="position:absolute;left:105.0px;top:1.0px;width:1.0px;height:6.0px;background:#a9aeb7"></div><div style="position:absolute;left:217.0px;top:1.0px;width:1.0px;height:6.0px;background:#a9aeb7"></div><div style="position:absolute;left:310.0px;top:1.0px;width:1.0px;height:6.0px;background:#a9aeb7"></div><div style="position:absolute;left:1087.0px;top:1.0px;width:1.0px;height:6.0px;background:#a9aeb7"></div><svg style="position:absolute;left:231.0px;top:1.0px;" width="10" height="6" viewBox="0 0 10 6"><path d="M1 6L4 8L9 0.5" fill="none" stroke="#3a6fd0" stroke-width="1.6"/></svg><div style="position:absolute;left:295.0px;top:4.0px;width:1.0px;height:3.0px;background:#555"></div><div style="position:absolute;left:297.5px;top:4.0px;width:1.0px;height:3.0px;background:#555"></div><div style="position:absolute;left:1092.0px;top:2.0px;width:19.0px;height:10.0px;background:#fbd572;border:1px solid #c9a246;border-radius:3px;box-sizing:border-box"></div><div style="position:absolute;left:1096.0px;top:5.5px;width:11.0px;height:1.5px;background:#333"></div><div style="position:absolute;left:1115.0px;top:5.5px;width:2.0px;height:1.5px;background:#222"></div><div style="position:absolute;left:1118.5px;top:5.5px;width:2.0px;height:1.5px;background:#222"></div><div style="position:absolute;left:1132.0px;top:5.5px;width:10.0px;height:1.5px;background:#444"></div><div style="position:absolute;left:1230.0px;top:3.0px;width:14.0px;height:14.0px;border:1px solid #7d838d;border-radius:50%;background:#fff;box-sizing:border-box"></div><div style="position:absolute;left:1349.0px;top:3.0px;width:14.0px;height:14.0px;border:1px solid #7d838d;border-radius:50%;background:#fff;box-sizing:border-box"></div><div style="position:absolute;left:1291.5px;top:4.0px;width:8.0px;height:8.0px;border:1px solid #555b65;background:#fff;box-sizing:border-box"></div></div>
<div id="mini" style="position:absolute;left:525px;top:185px;width:228px;height:50px;box-sizing:border-box;background:linear-gradient(#fff,#f6f7f9);border:1px solid #a9aeb6;border-radius:3px;box-shadow:1px 2px 4px rgba(60,60,90,.28)"><div style="position:absolute;left:1.5px;top:1.0px;width:95.0px;height:21.5px;background:#fff;border:1px solid #c6cbd2;box-sizing:border-box"></div><div style="position:absolute;left:95.5px;top:1.0px;width:41.5px;height:21.5px;background:#fff;border:1px solid #c6cbd2;box-sizing:border-box"></div><div style="position:absolute;left:4.0px;top:3.0px;width:79.5px;height:17.0px;overflow:hidden"><span class="t" style="left:-0.2px;top:0.1px;font-size:12px;line-height:16px;color:#111;letter-spacing:-0.25px;">Calibri (Основной те</span></div><svg style="position:absolute;left:85.3px;top:8.5px;" width="7" height="5" viewBox="0 0 7 5"><path d="M1.0 0.5h5l-2.5 3z" fill="#6d7178"/></svg><span class="t" style="left:99.1px;top:3.1px;font-size:12px;line-height:16px;color:#111;letter-spacing:-0.43px;">11</span><svg style="position:absolute;left:126.1px;top:8.5px;" width="7" height="5" viewBox="0 0 7 5"><path d="M1.0 0.5h5l-2.5 3z" fill="#6d7178"/></svg><span class="t" style="left:139.6px;top:3.1px;font-size:15.5px;line-height:20px;color:#222;font-weight:bold;font-family:'Liberation Serif', serif;">A</span><svg style="position:absolute;left:151.0px;top:4.5px;" width="6" height="4" viewBox="0 0 6 4"><path d="M0 3.5L3 0L6 3.5z" fill="#2f5fb0"/></svg><span class="t" style="left:162.8px;top:6.4px;font-size:11.5px;line-height:16px;color:#222;font-weight:bold;font-family:'Liberation Serif', serif;">A</span><svg style="position:absolute;left:171.0px;top:5.5px;" width="6" height="4" viewBox="0 0 6 4"><path d="M0 0.5L3 4L6 0.5z" fill="#2f5fb0"/></svg><svg style="position:absolute;left:183.0px;top:3.0px;" width="18" height="17" viewBox="0 0 18 17"><path d="M8.5 1V16" stroke="#111" stroke-width="1" stroke-dasharray="1 1"/><path d="M3 3.5H7M10 3.5H17M3 11.5H7M10 11.5H17M3 13.5H7M10 13.5H11.5" stroke="#000" stroke-width="1"/><path d="M10 6H17M10 9H14.5" stroke="#000" stroke-width="2"/><path d="M3 7.5H7.5" stroke="#2f6fd6" stroke-width="1.4"/><path d="M0.6 7.5L4.2 4.6V10.4z" fill="#2f6fd6"/></svg><svg style="position:absolute;left:205.0px;top:3.0px;" width="18" height="17" viewBox="0 0 18 17"><path d="M8.5 1V16" stroke="#111" stroke-width="1" stroke-dasharray="1 1"/><path d="M3 3.5H7M10 3.5H17M3 11.5H7M10 11.5H17M3 13.5H7M10 13.5H11.5" stroke="#000" stroke-width="1"/><path d="M10 6H17M10 9H14.5" stroke="#000" stroke-width="2"/><path d="M0.5 7.5H4" stroke="#2f6fd6" stroke-width="1.4"/><path d="M7 7.5L3.4 4.6V10.4z" fill="#2f6fd6"/></svg><span class="t" style="left:4.8px;top:27.6px;font-size:13.5px;line-height:17px;color:#111;font-weight:bold;font-family:'Liberation Serif', serif;">Ж</span><span class="t" style="left:27.9px;top:27.6px;font-size:13.5px;line-height:17px;color:#111;font-weight:bold;font-style:italic;font-family:'Liberation Serif', serif;">К</span><svg style="position:absolute;left:48.5px;top:31.0px;" width="16" height="13" viewBox="0 0 16 13"><path d="M1 1.5H15" stroke="#000" stroke-width="1"/><path d="M1 5.5H15" stroke="#000" stroke-width="1"/><path d="M1 9.5H15" stroke="#000" stroke-width="1"/><path d="M3 3.5H13" stroke="#000" stroke-width="1"/><path d="M3 7.5H13" stroke="#000" stroke-width="1"/><path d="M3 11.5H13" stroke="#000" stroke-width="1"/></svg><svg style="position:absolute;left:68.5px;top:28.0px;" width="18" height="17" viewBox="0 0 18 17"><rect x="1" y="1.2" width="9.5" height="8.6" fill="#ffee55"/><text x="1.2" y="8.6" font-family="Liberation Sans" font-size="9" fill="#222">ab</text>
<path d="M9.2 9.4L14.6 2.6Q15.6 2 16.4 2.8Q17 3.6 16.4 4.4L11 10.8L8.6 11.6z" fill="#e8eef8" stroke="#55719f" stroke-width="0.9"/><path d="M8.6 11.6L9.2 9.4L11 10.8z" fill="#f6d35a" stroke="#a58a2e" stroke-width="0.5"/>
<rect x="1.5" y="13" width="15" height="3" fill="#fff" stroke="#9aa0a8"/></svg><svg style="position:absolute;left:90.8px;top:34.0px;" width="7" height="5" viewBox="0 0 7 5"><path d="M1.0 0.5h5l-2.5 3z" fill="#6d7178"/></svg><svg style="position:absolute;left:103.0px;top:28.0px;" width="18" height="17" viewBox="0 0 18 17"><text x="3.6" y="11.9" font-family="Liberation Serif" font-size="15.5" font-weight="bold" fill="#24479c">A</text><rect x="1" y="13" width="16" height="3.8" fill="#ee1111"/></svg><svg style="position:absolute;left:125.0px;top:34.0px;" width="7" height="5" viewBox="0 0 7 5"><path d="M1.0 0.5h5l-2.5 3z" fill="#6d7178"/></svg><svg style="position:absolute;left:136.5px;top:27.5px;" width="18" height="18" viewBox="0 0 18 18"><defs><linearGradient id="bk1" x1="0" y1="0" x2="1" y2="1"><stop offset="0" stop-color="#ffffff"/><stop offset="1" stop-color="#9fb9e6"/></linearGradient></defs>
<path d="M3.2 8.6L8.6 2.6L15.2 8.2L10 13.4z" fill="url(#bk1)" stroke="#2f5597" stroke-width="1.1" stroke-linejoin="round"/>
<path d="M9.6 0.9V6.4" stroke="#3a3f48" stroke-width="1.2"/><circle cx="9.6" cy="6.6" r="1" fill="#3a3f48"/><path d="M8.2 2.2Q9.6 -0.2 11 2.2" fill="none" stroke="#3a3f48" stroke-width="0.9"/>
<path d="M13.8 5.2Q17.6 6.6 17.4 11.8Q15.4 10.6 14.9 8z" fill="#3f7be0" stroke="#2f62c0" stroke-width="0.5"/>
<rect x="1.5" y="14" width="16" height="3.2" fill="#fff" stroke="#9aa0a8"/></svg><svg style="position:absolute;left:158.5px;top:34.0px;" width="7" height="5" viewBox="0 0 7 5"><path d="M1.0 0.5h5l-2.5 3z" fill="#6d7178"/></svg><div style="position:absolute;left:169.0px;top:26.0px;width:22.5px;height:22.0px;background:linear-gradient(#fee79c 0,#fcd872 55%,#fbd263 100%);border:1px solid #d3a545;border-radius:2px;box-sizing:border-box"></div><svg style="position:absolute;left:173.0px;top:29.0px;" width="15" height="16" viewBox="0 0 15 16"><path d="M1 2.5H14M1 7.5H14M1 12.5H14" stroke="#6b5720" stroke-width="1" stroke-dasharray="1 1" fill="none"/><path d="M1.5 2V13M7.5 2V13M13.5 2V13" stroke="#6b5720" stroke-width="1" stroke-dasharray="1 1" fill="none"/><path d="M0.8 14.5H14.2" stroke="#111" stroke-width="1.4"/></svg><svg style="position:absolute;left:192.8px;top:34.0px;" width="7" height="5" viewBox="0 0 7 5"><path d="M1.0 0.5h5l-2.5 3z" fill="#6d7178"/></svg><svg style="position:absolute;left:205.0px;top:29.0px;" width="18" height="16" viewBox="0 0 18 16"><path d="M12.2 4.2L15.2 1.1Q16.7 0.5 17.2 1.9L14.6 6.3z" fill="#3558b0" stroke="#263f86" stroke-width="0.6"/>
<path d="M8.4 4.8L12.2 3L15 6.8L11.6 9.4z" fill="#cfd3da" stroke="#6f7580" stroke-width="0.7"/><path d="M10 4.2L13 8.2M11.2 3.6L14.1 7.5" stroke="#8a909b" stroke-width="0.6"/>
<path d="M8.4 4.8L11.6 9.4Q12.4 12 10.6 14.6Q8.6 15.2 7.6 13.4Q4 12.6 1 8.4Q5.4 8.2 8.4 4.8z" fill="#f3d57e" stroke="#a8893a" stroke-width="0.7"/>
<path d="M3.6 9.6Q6.4 9.8 8.8 7.4M6 11.6Q8.6 11 10.4 9.2" fill="none" stroke="#d8b85c" stroke-width="0.7"/></svg></div>
<div id="ctx" style="position:absolute;left:525px;top:251px;width:217px;height:350px;box-sizing:border-box;background:#fff;border:1px solid #a2a6ad;border-radius:2px;box-shadow:2px 2px 3px rgba(90,80,130,.28)"><div style="position:absolute;left:0.0px;top:0.0px;width:25.0px;height:348.0px;background:#fdfdfd"></div><div style="position:absolute;left:25.0px;top:1.0px;width:1.0px;height:346.0px;background:#dfe2e6"></div><div style="position:absolute;left:27.0px;top:45.0px;width:187.5px;height:17.5px;background:#eceef1"></div><span class="t" style="left:33.3px;top:4.2px;font-size:11.5px;line-height:16px;color:#1f2a3d;letter-spacing:-0.01px;">В<u>ы</u>резать</span><svg style="position:absolute;left:5.0px;top:4.5px;" width="14" height="15" viewBox="0 0 14 15"><path d="M4.3 0.8L5.6 1.2L9.4 9L8 9.6zM11.4 0.8L10.1 1.2L6.3 9L7.7 9.6z" fill="#7b8089" stroke="#5f646d" stroke-width="0.5"/>
<ellipse cx="5" cy="11.3" rx="1.8" ry="2.3" fill="#fff" stroke="#2b5fc0" stroke-width="1.6" transform="rotate(20 5 11.3)"/><ellipse cx="10" cy="11.3" rx="1.8" ry="2.3" fill="#fff" stroke="#2b5fc0" stroke-width="1.6" transform="rotate(-20 10 11.3)"/></svg><span class="t" style="left:33.3px;top:26.0px;font-size:11.5px;line-height:16px;color:#1f2a3d;letter-spacing:0.34px;"><u>К</u>опировать</span><svg style="position:absolute;left:4.5px;top:26.0px;" width="16" height="15" viewBox="0 0 16 15"><path d="M1.5 1.5H6L8.5 4V10.5H1.5z" fill="#fff" stroke="#6d8fc9"/><path d="M3 4.5h3M3 6.5h4M3 8.5h4" stroke="#5f86c9" stroke-width="0.9"/>
<path d="M7.5 5.5H12L15 8.5V14.5H7.5z" fill="#fff" stroke="#2f62b8"/><path d="M12 5.5V8.5H15" fill="#cfdcf2" stroke="#2f62b8"/><path d="M9 8.5h2.5M9 10.5h4.5M9 12.5h4.5" stroke="#3e74cc" stroke-width="1"/></svg><span class="t" style="left:33.3px;top:47.0px;font-size:11.5px;line-height:16px;color:#1f2a3d;letter-spacing:-0.36px;font-weight:bold;">Параметры вставки:</span><svg style="position:absolute;left:5.0px;top:49.0px;" width="16" height="14" viewBox="0 0 16 14"><rect x="1" y="2" width="10" height="10.5" rx="1" fill="#e3a83c" stroke="#8a6a28"/><rect x="3.5" y="0.8" width="5" height="2.8" rx="0.8" fill="#e6d9a8" stroke="#6f6a4c" stroke-width="0.8"/>
<path d="M6.5 6.5H12.5L15 9V13.5H6.5z" fill="#e8edf5" stroke="#3c4558"/><path d="M8.2 9h3.5M8.2 11h5" stroke="#7b8cab" stroke-width="0.9"/></svg><div style="position:absolute;left:30.0px;top:67.0px;width:23.0px;height:23.0px;background:linear-gradient(#fdedc3,#fbe1a0);border:1px solid #e6b552;border-radius:2.5px;box-sizing:border-box"></div><svg style="position:absolute;left:31.5px;top:67.0px;" width="20" height="22" viewBox="0 0 20 22"><rect x="7.2" y="0.6" width="5.6" height="3.4" rx="0.8" fill="#eef0f3" stroke="#9aa0a8" stroke-width="0.8"/><circle cx="10" cy="2" r="0.7" fill="#d43a2a"/>
<path d="M4.5 7.5H12L15.8 11.2V19.5H4.5z" fill="#fff" stroke="#6d7688"/><path d="M12 7.5V11.2H15.8" fill="#e6eaf0" stroke="#6d7688" stroke-width="0.9"/><path d="M6.5 11.5h4M6.5 13.5h7M6.5 15.5h7M6.5 17.5h7" stroke="#9aa3b3" stroke-width="0.8"/></svg><div style="position:absolute;left:32.0px;top:94.0px;width:182.0px;height:1.0px;background:repeating-linear-gradient(90deg,#c5c8ce 0,#c5c8ce 2px,transparent 2px,transparent 4px)"></div><span class="t" style="left:33.3px;top:99.9px;font-size:11.5px;line-height:16px;color:#1f2a3d;letter-spacing:-0.05px;"><u>В</u>ставить</span><svg style="position:absolute;left:200.0px;top:103.6px;" width="5" height="9" viewBox="0 0 5 9"><path d="M0.5 0.5L4.5 4.5L0.5 8.5z" fill="#7a7f87"/></svg><span class="t" style="left:33.3px;top:121.9px;font-size:11.5px;line-height:16px;color:#1f2a3d;letter-spacing:-0.09px;">Удалить <u>т</u>аблицу</span><svg style="position:absolute;left:5.0px;top:122.0px;" width="16" height="16" viewBox="0 0 16 16"><defs><linearGradient id="mg1" x1="0" y1="0" x2="1" y2="1"><stop offset="0" stop-color="#8fa0bd"/><stop offset="1" stop-color="#eef2f8"/></linearGradient><linearGradient id="mg2" x1="0" y1="0" x2="1" y2="1"><stop offset="0" stop-color="#5f8fe6"/><stop offset="1" stop-color="#e6eefc"/></linearGradient></defs>
<rect x="1.5" y="1.5" width="13" height="13" fill="#fff" stroke="#8593ad"/><path d="M1.5 5.5h13M1.5 10h13M6 1.5v13M10.5 1.5v13" stroke="#a9b5cb" stroke-width="0.9"/><rect x="2" y="2" width="12" height="3" fill="#dfe5ef"/>
<path d="M7.2 7.2L13.8 13.8M13.8 7.2L7.2 13.8" stroke="#e43a1a" stroke-width="2.1" stroke-linecap="round"/></svg><span class="t" style="left:33.3px;top:144.0px;font-size:11.5px;line-height:16px;color:#1f2a3d;letter-spacing:0.28px;">Об<u>ъ</u>единить ячейки</span><svg style="position:absolute;left:4.0px;top:144.0px;" width="17" height="15" viewBox="0 0 17 15"><rect x="1.5" y="1.5" width="15" height="11.5" fill="#fff" stroke="#4b6aa8"/><rect x="4.5" y="4.5" width="12" height="8.5" fill="url(#mg2)" stroke="#4b6aa8"/><path d="M1.5 4.5h15M4.5 1.5v11.5M1.5 8.5h3M8.5 1.5v3M12.5 1.5v3" stroke="#4b6aa8" stroke-width="0.9"/></svg><span class="t" style="left:33.3px;top:166.1px;font-size:11.5px;line-height:16px;color:#1f2a3d;letter-spacing:0.02px;">Выровнят<u>ь</u> высоту строк</span><svg style="position:absolute;left:4.0px;top:165.0px;" width="17" height="17" viewBox="0 0 17 17"><rect x="1.5" y="2.5" width="7" height="12" fill="url(#mg1)" stroke="#5a6f96"/><path d="M1.5 8.5h7" stroke="#5a6f96"/><path d="M13.5 1V16M10.5 4.5h6M10.5 8.5h6M10.5 12.5h6" stroke="#1f3f9a" stroke-width="1.2"/></svg><span class="t" style="left:33.3px;top:187.7px;font-size:11.5px;line-height:16px;color:#1f2a3d;letter-spacing:0.14px;">Выровнять <u>ш</u>ирину столбцов</span><svg style="position:absolute;left:4.0px;top:187.0px;" width="17" height="17" viewBox="0 0 17 17"><rect x="2.5" y="8.5" width="12" height="7" fill="url(#mg1)" stroke="#5a6f96"/><path d="M8.5 8.5v7" stroke="#5a6f96"/><path d="M1 4.5H16M4.5 1.5v6M8.5 1.5v6M12.5 1.5v6" stroke="#1f3f9a" stroke-width="1.2"/></svg><div style="position:absolute;left:32.0px;top:208.0px;width:182.0px;height:1.0px;background:repeating-linear-gradient(90deg,#c5c8ce 0,#c5c8ce 2px,transparent 2px,transparent 4px)"></div><span class="t" style="left:33.3px;top:213.3px;font-size:11.5px;line-height:16px;color:#1f2a3d;letter-spacing:0.05px;">Нарисовать таблицу</span><svg style="position:absolute;left:4.0px;top:213.0px;" width="18" height="16" viewBox="0 0 18 16"><rect x="1.5" y="5.5" width="11" height="9" fill="#fff" stroke="#7b8aa6"/><path d="M1.5 7.5h11" stroke="#4f7fd0" stroke-width="2"/><path d="M1.5 11h11M5 5.5v9M9 5.5v9" stroke="#9fb0cc" stroke-width="0.9"/>
<path d="M8 11L14.5 2.5L16.5 4L10 12.5L7.6 13.4z" fill="#f0c468" stroke="#7a5a28" stroke-width="0.8"/><path d="M14.5 2.5L15.6 1.2L17.4 2.6L16.5 4z" fill="#d9534a" stroke="#7a5a28" stroke-width="0.6"/></svg><span class="t" style="left:33.3px;top:236.0px;font-size:11.5px;line-height:16px;color:#1f2a3d;letter-spacing:0.04px;"><u>Г</u>раницы и заливка...</span><svg style="position:absolute;left:5.0px;top:235.0px;" width="16" height="17" viewBox="0 0 16 17"><path d="M2.5 2.5H10.5L13.5 5.5V14.5H2.5z" fill="#fff" stroke="#c98a2c" stroke-width="1.6"/><path d="M10.5 2.5V5.5H13.5" fill="#e8eaee" stroke="#8a8f98" stroke-width="0.8"/><path d="M14.5 6v9.2H4" fill="none" stroke="#8a8f98" stroke-width="1"/></svg><div style="position:absolute;left:32.0px;top:255.0px;width:182.0px;height:1.0px;background:repeating-linear-gradient(90deg,#c5c8ce 0,#c5c8ce 2px,transparent 2px,transparent 4px)"></div><span class="t" style="left:33.3px;top:261.9px;font-size:11.5px;line-height:16px;color:#1f2a3d;letter-spacing:0.16px;"><u>В</u>ыравнивание ячеек</span><svg style="position:absolute;left:200.0px;top:265.6px;" width="5" height="9" viewBox="0 0 5 9"><path d="M0.5 0.5L4.5 4.5L0.5 8.5z" fill="#7a7f87"/></svg><span class="t" style="left:33.3px;top:283.9px;font-size:11.5px;line-height:16px;color:#1f2a3d;letter-spacing:0.36px;">А<u>в</u>топодбор</span><svg style="position:absolute;left:200.0px;top:287.6px;" width="5" height="9" viewBox="0 0 5 9"><path d="M0.5 0.5L4.5 4.5L0.5 8.5z" fill="#7a7f87"/></svg><span class="t" style="left:33.3px;top:306.0px;font-size:11.5px;line-height:16px;color:#1f2a3d;letter-spacing:-0.06px;"><u>В</u>ставить название...</span><svg style="position:absolute;left:5.0px;top:306.0px;" width="16" height="17" viewBox="0 0 16 17"><rect x="1.5" y="1.5" width="13" height="14" fill="#fff" stroke="#5a6f96"/><rect x="4" y="4" width="8" height="6" fill="#e8d8ee" stroke="#8a5aa0" stroke-width="0.8"/><rect x="6" y="5.5" width="4" height="3" fill="#c7403a"/><path d="M4 12.5h8" stroke="#e02a1a" stroke-width="1.2"/></svg><span class="t" style="left:33.3px;top:328.1px;font-size:11.5px;line-height:16px;color:#1f2a3d;letter-spacing:-0.07px;"><u>С</u>войства таблицы...</span><svg style="position:absolute;left:4.0px;top:327.0px;" width="17" height="16" viewBox="0 0 17 16"><rect x="1.5" y="3.5" width="13" height="11" fill="#fff" stroke="#5a6f96"/><path d="M1.5 5.2h13" stroke="#3f6fc4" stroke-width="2.4"/><path d="M1.5 9h13M1.5 12h13M6 6.5v8M10.5 6.5v8" stroke="#8ea3c8" stroke-width="0.9"/>
<path d="M5 5.5L9 2.5L15.5 4.5L12 8z" fill="#f0c94e" stroke="#8a7020" stroke-width="0.7"/><path d="M5 5.5L7.5 8L12 8" fill="none" stroke="#8a7020" stroke-width="0.7"/></svg></div>
<div id="hl" style="position:absolute;left:525px;top:479px;width:219px;height:35px;box-sizing:border-box;border:4.5px solid #ed1c24"></div>
</div></body></html>
